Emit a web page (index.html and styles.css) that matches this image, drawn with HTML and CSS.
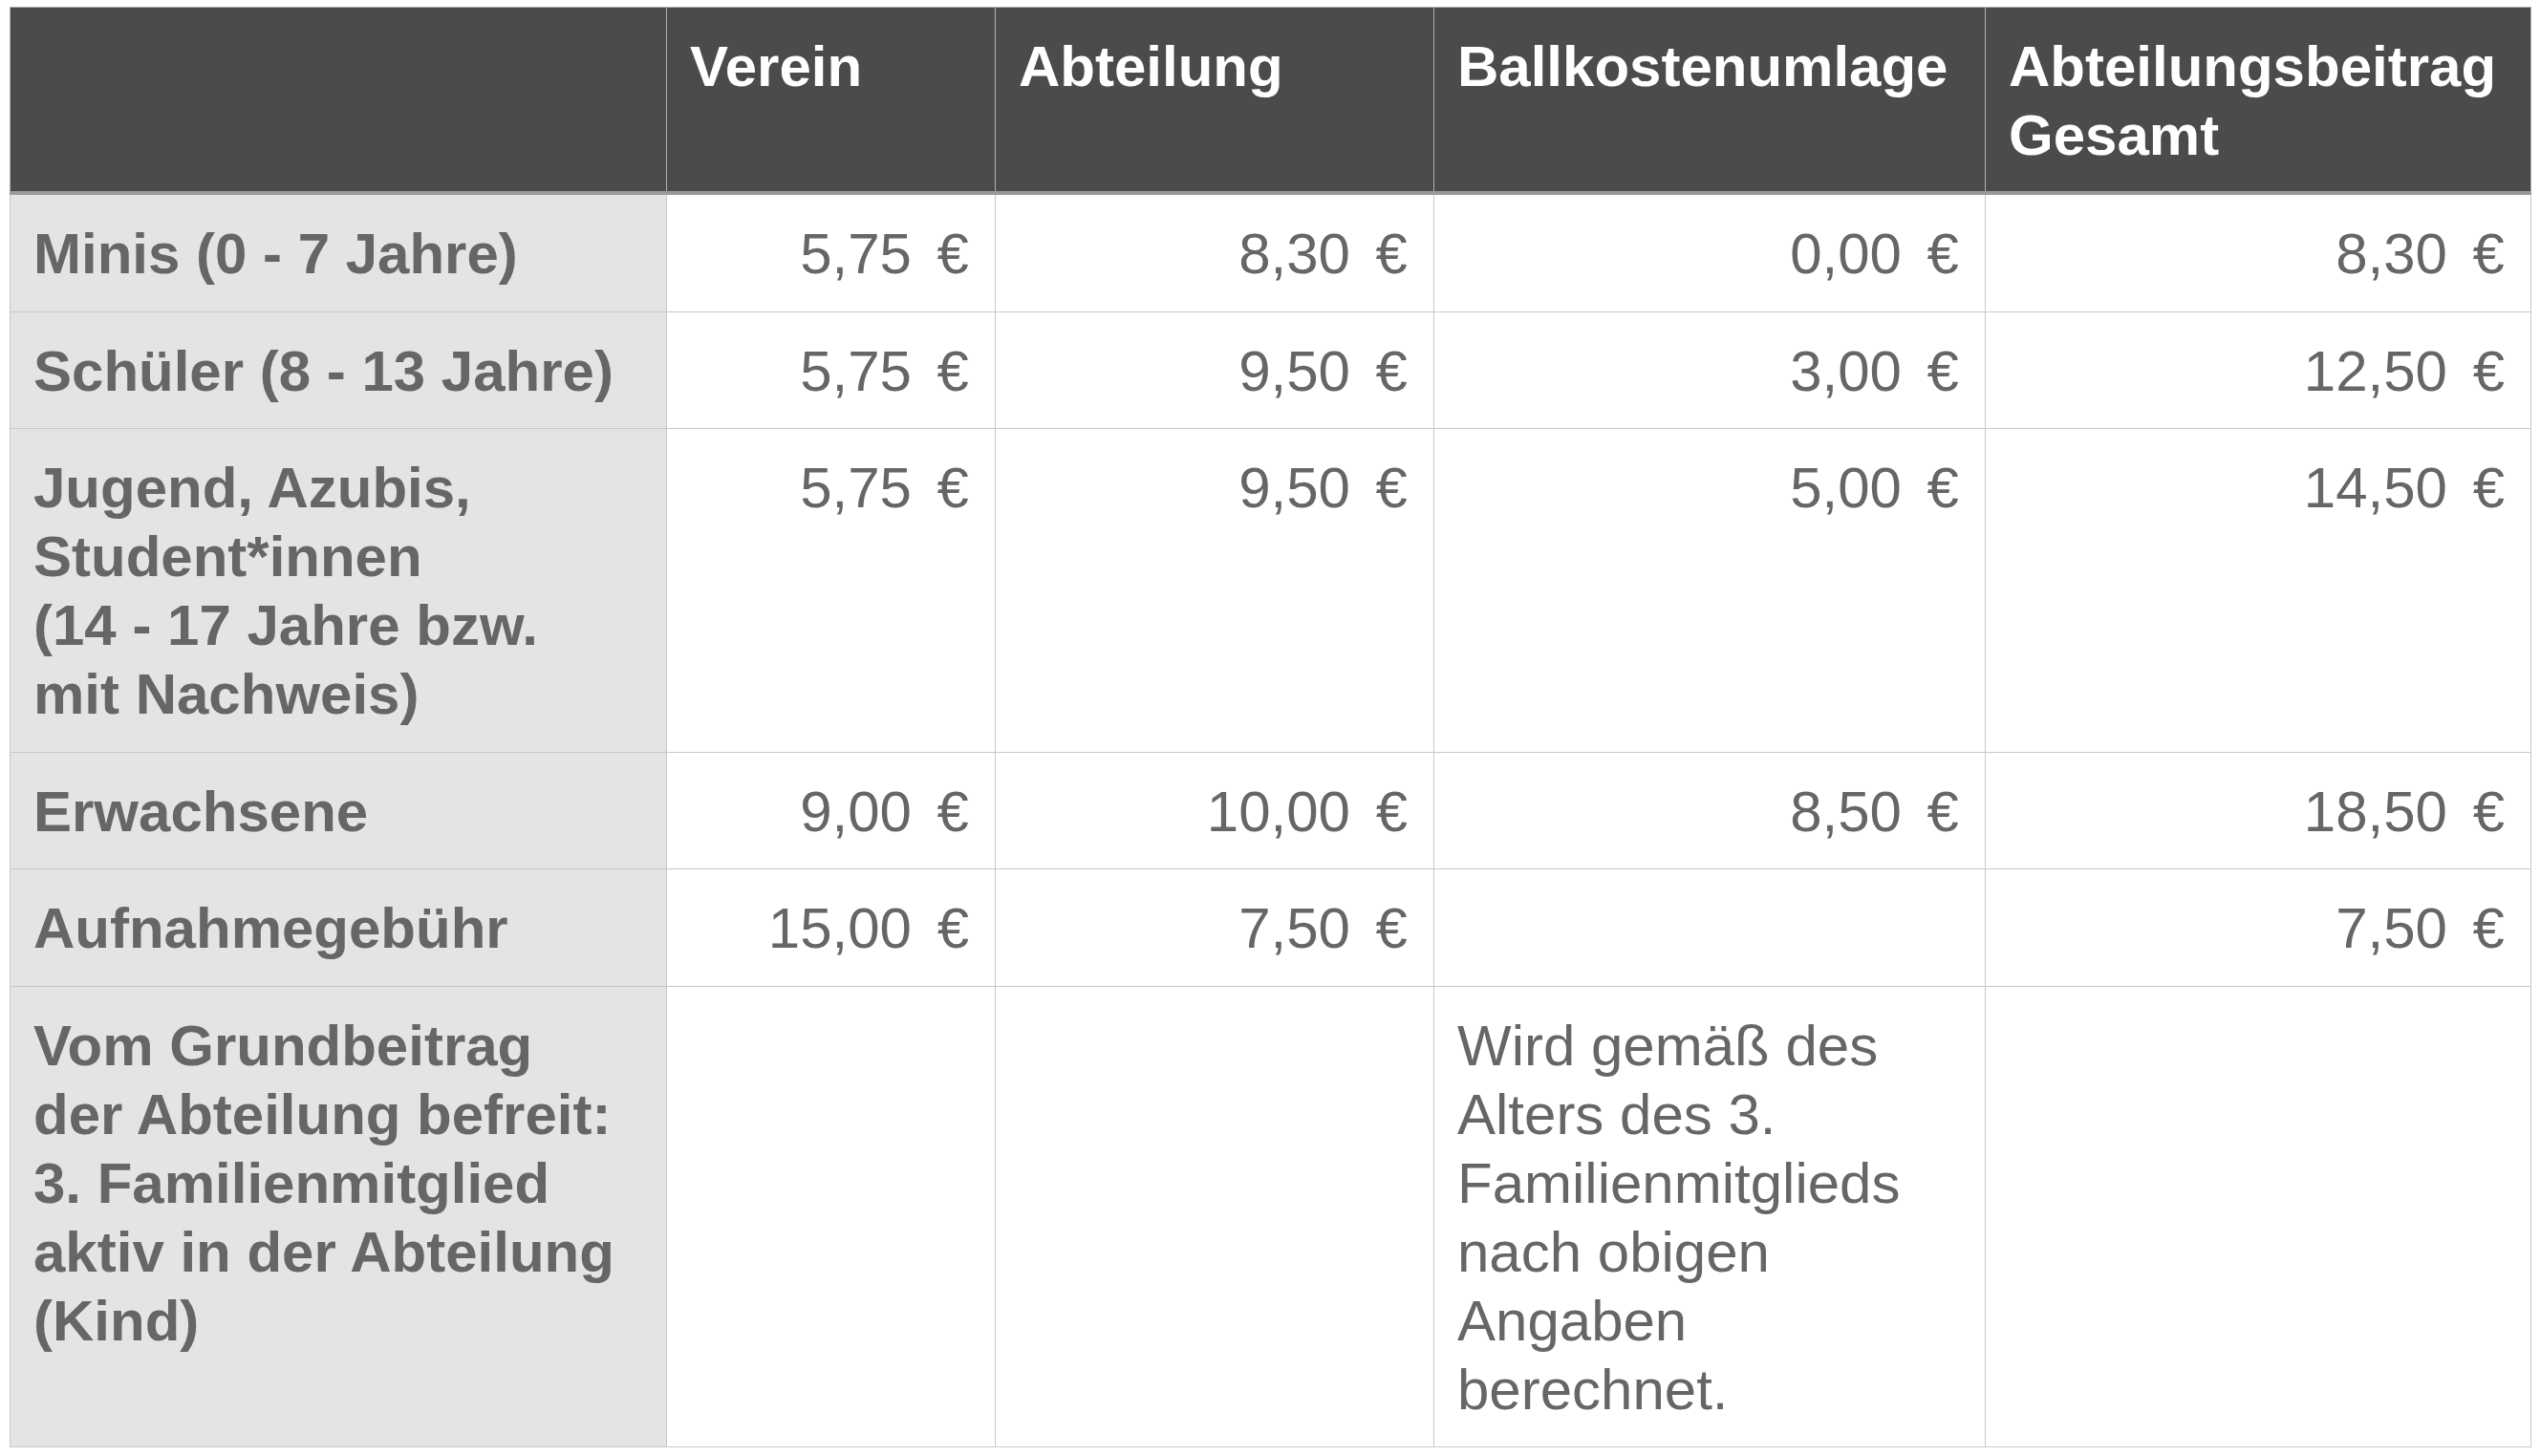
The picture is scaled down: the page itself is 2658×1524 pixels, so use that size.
FILE: index.html
```html
<!DOCTYPE html>
<html lang="de">
<head>
<meta charset="utf-8">
<title>Beiträge</title>
<link rel="stylesheet" href="styles.css">
</head>
<body>
<div class="page">
<table class="fees">
  <colgroup>
    <col class="c-label">
    <col class="c-verein">
    <col class="c-abt">
    <col class="c-ball">
    <col class="c-total">
  </colgroup>
  <thead>
    <tr>
      <th></th>
      <th>Verein</th>
      <th>Abteilung</th>
      <th>Ballkostenumlage</th>
      <th>Abteilungsbeitrag<br>Gesamt</th>
    </tr>
  </thead>
  <tbody>
    <tr>
      <td class="label">Minis (0 - 7 Jahre)</td>
      <td class="num">5,75 €</td>
      <td class="num">8,30 €</td>
      <td class="num">0,00 €</td>
      <td class="num">8,30 €</td>
    </tr>
    <tr>
      <td class="label">Schüler (8 - 13 Jahre)</td>
      <td class="num">5,75 €</td>
      <td class="num">9,50 €</td>
      <td class="num">3,00 €</td>
      <td class="num">12,50 €</td>
    </tr>
    <tr>
      <td class="label">Jugend, Azubis,<br>Student*innen<br>(14 - 17 Jahre bzw.<br>mit Nachweis)</td>
      <td class="num">5,75 €</td>
      <td class="num">9,50 €</td>
      <td class="num">5,00 €</td>
      <td class="num">14,50 €</td>
    </tr>
    <tr>
      <td class="label">Erwachsene</td>
      <td class="num">9,00 €</td>
      <td class="num">10,00 €</td>
      <td class="num">8,50 €</td>
      <td class="num">18,50 €</td>
    </tr>
    <tr>
      <td class="label">Aufnahmegebühr</td>
      <td class="num">15,00 €</td>
      <td class="num">7,50 €</td>
      <td class="num"></td>
      <td class="num">7,50 €</td>
    </tr>
    <tr>
      <td class="label">Vom Grundbeitrag<br>der Abteilung befreit:<br>3. Familienmitglied<br>aktiv in der Abteilung<br>(Kind)</td>
      <td class="num"></td>
      <td class="num"></td>
      <td class="note">Wird gemäß des<br>Alters des 3.<br>Familienmitglieds<br>nach obigen<br>Angaben<br>berechnet.</td>
      <td class="num"></td>
    </tr>
  </tbody>
</table>
</div>
</body>
</html>
```

FILE: styles.css
```css
html, body {
  margin: 0;
  padding: 0;
  background: #ffffff;
}

.page {
  padding: 7px 0 0 10px;
}

.fees {
  border-collapse: collapse;
  table-layout: fixed;
  width: 2638px;
  font-family: "Liberation Sans", Arial, Helvetica, sans-serif;
  font-size: 60px;
  line-height: 72px;
  color: #656766;
  border: 1px solid #c4c4c4;
}

.c-label { width: 687px; }
.c-verein { width: 344px; }
.c-abt { width: 459px; }
.c-ball { width: 577px; }
.c-total { width: 571px; }

.fees th {
  background: #4b4b4b;
  color: #ffffff;
  font-weight: bold;
  text-align: left;
  vertical-align: top;
  padding: 26px 26px 22px 24px;
  border: 1px solid #b0b0b0;
  border-bottom: 4px solid #999999;
}

.fees td {
  vertical-align: top;
  padding: 26px 27px 23.5px 24px;
  border: 1px solid #c8c8c8;
  background: #ffffff;
}

.fees td.label {
  background: #e3e4e3;
  font-weight: bold;
}

.fees td.num {
  text-align: right;
  word-spacing: 10px;
}

.fees td.note {
  text-align: left;
}
```
